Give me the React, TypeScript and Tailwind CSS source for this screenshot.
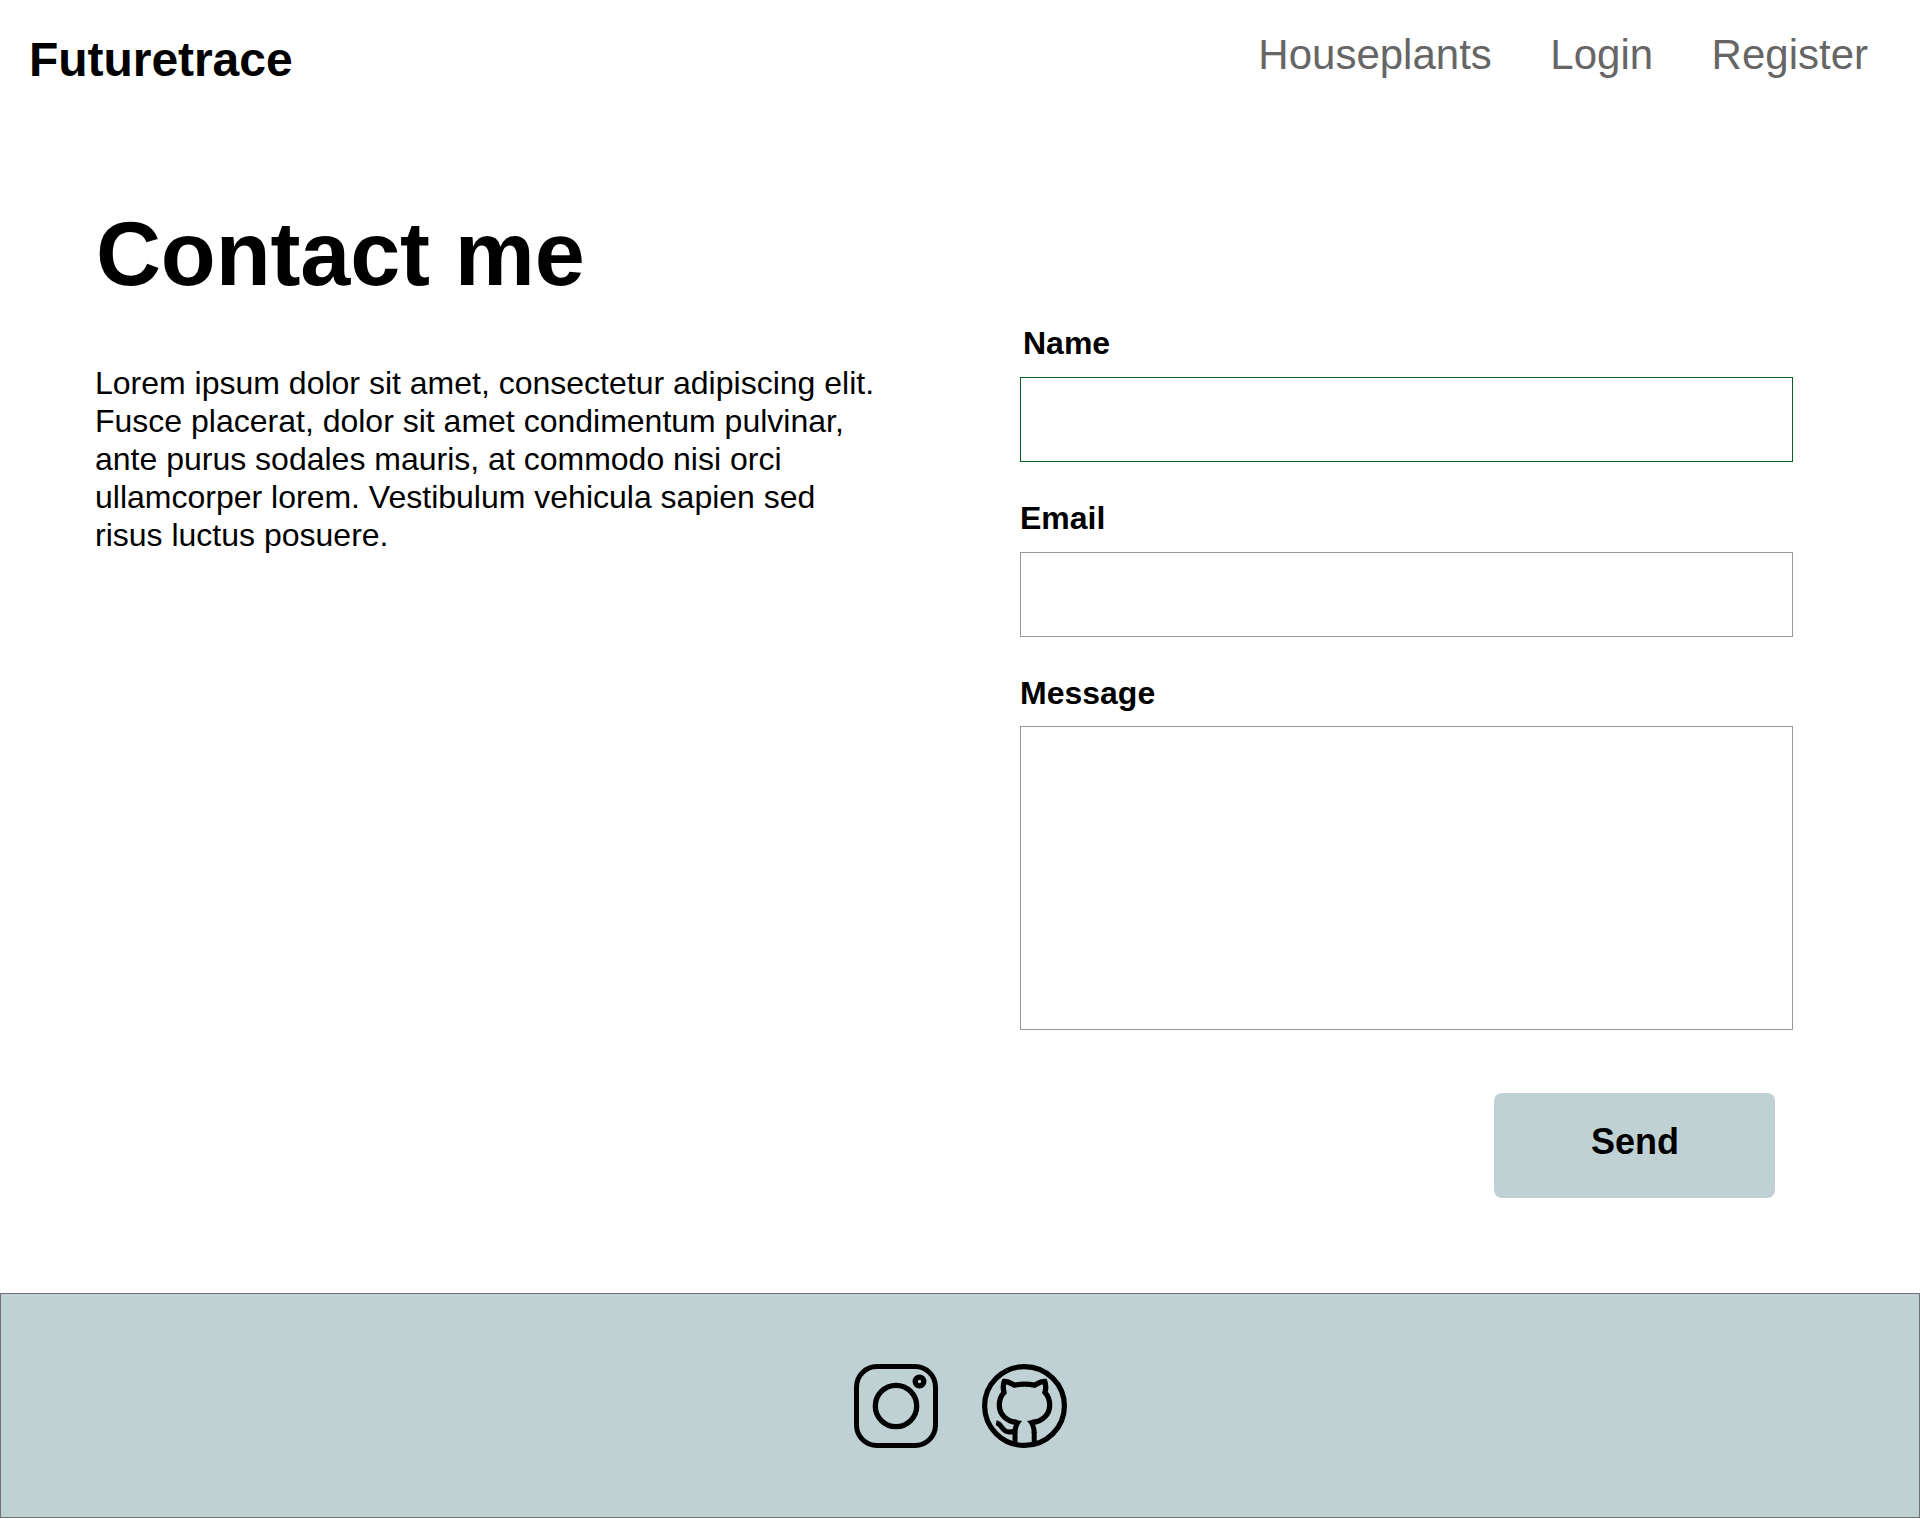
import React from "react";

function InstagramIcon() {
  return (
    <svg width="84" height="84" viewBox="0 0 84 84" fill="none" stroke="#000" strokeWidth="5">
      <rect x="2.5" y="2.5" width="79" height="79" rx="20.5" />
      <circle cx="42" cy="42" r="20.7" strokeWidth="5.3" />
      <circle cx="65.5" cy="17.5" r="4.3" strokeWidth="5.3" />
    </svg>
  );
}

function GithubIcon() {
  return (
    <svg width="85" height="84" viewBox="0 0 85 84" fill="none" stroke="#000" strokeWidth="5">
      <ellipse cx="42.5" cy="42" rx="39.9" ry="39.4" strokeWidth="5.2" />
      <path
        d="M35 58.5 C25 57.5 17.3 51 17.3 41 C17.3 36 18.8 32 22 28.5 C21 24.5 20.8 21 22.3 17.3 C26.5 17.3 29.5 19.5 32.5 21.2 C38.5 20 46.5 20 52.5 21.2 C55.5 19.5 58.5 17.3 62.7 17.3 C64.2 21 64 24.5 63 28.5 C66.2 32 67.7 36 67.7 41 C67.7 51 60 57.500 50 58.5"
        strokeWidth="5.3"
      />
      <path d="M32 55.5 L40 57 C37.5 60 35.5 63.5 35.5 69 L30.5 69 C30.5 65 31 62 33 59 Z" fill="#000" stroke="none" />
      <path d="M53 55.5 L45 57 C48 60 49.7 63.5 49.7 69 L54.7 69 C54.7 65 54 62 52 59 Z" fill="#000" stroke="none" />
      <path d="M33 68 V80" />
      <path d="M52.2 68 V80" />
      <path d="M14.2 58.8 C20.5 60 19.5 67.8 27 68 C29.5 68 31 67.7 33 67.2" />
    </svg>
  );
}

const inputBase = "block w-[773px] resize-none border bg-white px-4 text-[32px] outline-none";
const labelBase = "block text-[32px] leading-9 font-bold";

export default function App() {
  return (
    <div className="flex h-[1519px] w-[1920px] flex-col bg-white font-['Liberation_Sans',Arial,sans-serif] text-black">
      <header className="flex h-[202px] items-start justify-between pr-[52px] pl-[29px]">
        <div className="pt-8 text-[48px] leading-[56px] font-bold tracking-[-0.05px]">Futuretrace</div>
        <nav className="flex gap-[58.5px] pt-[31px] text-[42px] leading-[48px] text-[#666]">
          <a>Houseplants</a>
          <a>Login</a>
          <a>Register</a>
        </nav>
      </header>

      <main className="flex h-[1091px] pl-[95px]">
        <section className="w-[925px]">
          <h1 className="pl-px text-[90px] leading-[104px] font-bold tracking-[-0.15px]">Contact me</h1>
          <p className="mt-[58px] w-[800px] text-[32px] leading-[38px]">
            Lorem ipsum dolor sit amet, consectetur adipiscing elit.
            <br />
            Fusce placerat, dolor sit amet condimentum pulvinar,
            <br />
            ante purus sodales mauris, at commodo nisi orci
            <br />
            ullamcorper lorem. Vestibulum vehicula sapien sed
            <br />
            risus luctus posuere.
          </p>
        </section>

        <form className="w-[773px] pt-[123px]">
          <label htmlFor="name" className={labelBase + " pl-[3px]"}>Name</label>
          <input id="name" className={inputBase + " mt-4 h-[85px] border-[#0b6120]"} />
          <label htmlFor="email" className={labelBase + " mt-[38px]"}>Email</label>
          <input id="email" className={inputBase + " mt-4 h-[85px] border-[#979797]"} />
          <label htmlFor="message" className={labelBase + " mt-[38px]"}>Message</label>
          <textarea id="message" className={inputBase + " mt-[15px] h-[304px] border-[#979797]"} />
          <div className="flex justify-end pt-[63px] pr-[18px]">
            <button
              type="button"
              className="flex h-[105px] w-[281px] justify-center rounded-[8px] bg-[#c0d1d3] pt-[29px] pl-px text-[36px] leading-10 font-bold"
            >
              Send
            </button>
          </div>
        </form>
      </main>

      <footer className="flex h-[225px] gap-11 border border-[#707070] bg-[#c0d1d3] pt-[70px] pl-[853px]">
        <InstagramIcon />
        <GithubIcon />
      </footer>
    </div>
  );
}
